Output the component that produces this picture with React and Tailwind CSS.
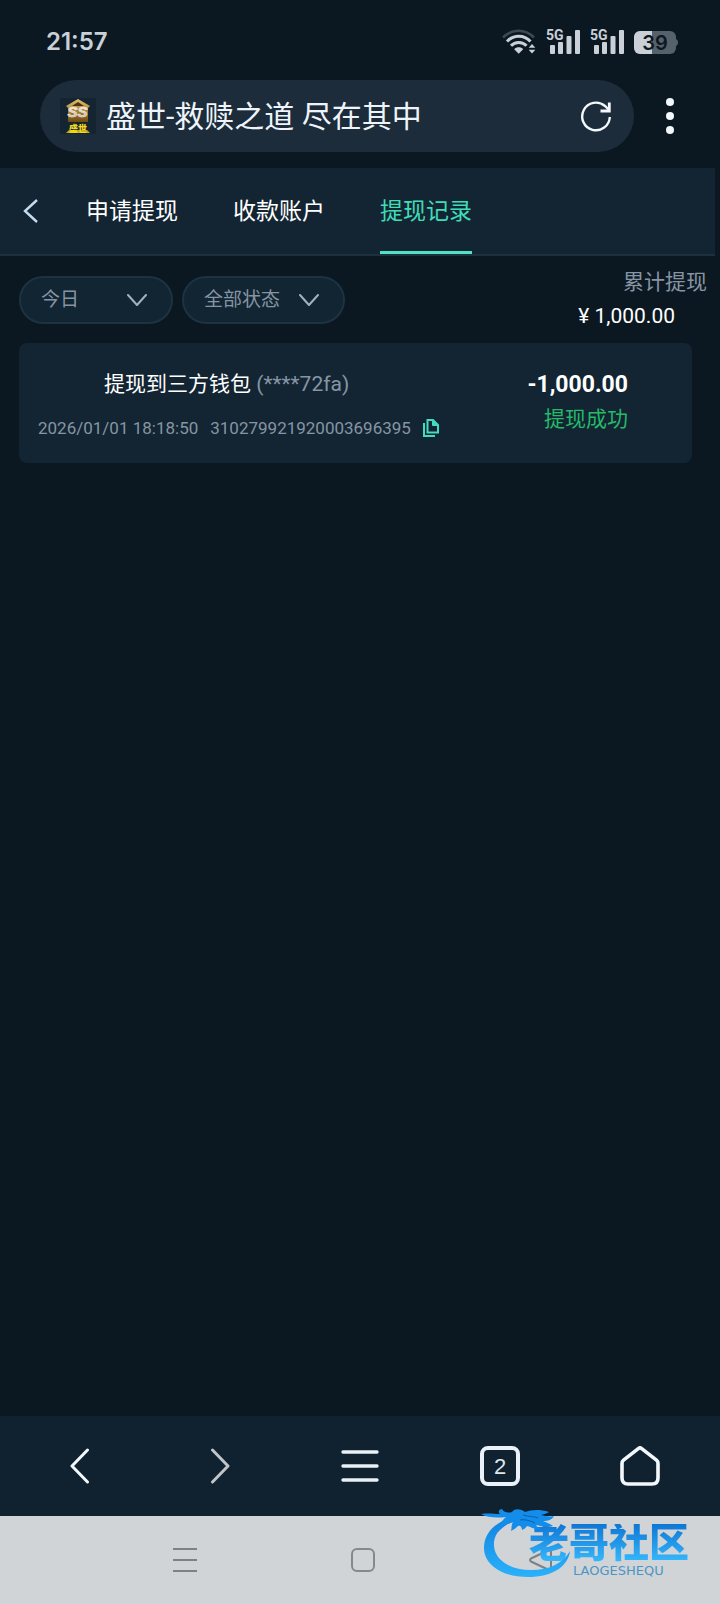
import { useState } from "react";

const tabs = ["申请提现", "收款账户", "提现记录"];

const records = [
  {
    id: "310279921920003696395",
    title: "提现到三方钱包",
    wallet: "(****72fa)",
    time: "2026/01/01 18:18:50",
    amount: "-1,000.00",
    status: "提现成功",
  },
];

function WifiIcon() {
  return (
    <svg width="34" height="26" viewBox="0 0 34 26" fill="none">
      <path d="M1 8.5C10 -0.5 23 -0.5 32 8.5" stroke="#3d4a55" strokeWidth="2.6" />
      <path d="M5 12.5C11.5 5.500 22 5.500 28.500 12.500" stroke="#c9d0d8" strokeWidth="3" />
      <path d="M9 16.800C13 12.400 20.500 12.400 24.500 16.800" stroke="#c9d0d8" strokeWidth="3" />
      <path d="M16.700 24.800L12.200 20.200C14.500 17.600 19 17.600 21.200 20.200Z" fill="#c9d0d8" />
      <path d="M26.700 18.800L30 15L33.300 18.800ZM26.700 20.800H33.300L30 24.500Z" fill="#c9d0d8" />
    </svg>
  );
}

function Signal() {
  return (
    <div className="relative h-[26px] w-[34px] text-[#c9d0d8]">
      <span className="absolute -top-px left-0 text-[14px] leading-[14px] font-bold">5G</span>
      <svg width="34" height="26" viewBox="0 0 34 26" fill="currentColor">
        <rect x="4" y="16" width="5" height="9" rx="1" />
        <rect x="12" y="13" width="5" height="12" rx="1" />
        <rect x="20.500" y="7" width="5" height="18" rx="1" />
        <rect x="29" y="1" width="5" height="24" rx="1" />
      </svg>
    </div>
  );
}

function Battery() {
  return (
    <div className="relative h-[23px] w-[44px]">
      <svg width="44" height="23" viewBox="0 0 44 23">
        <path d="M41 8C43 8 44 9.500 44 11.500S43 15 41 15Z" fill="#56616b" />
        <rect width="42" height="23" rx="6" fill="#56616b" />
        <path d="M6 0H18V23H6A6 6 0 0 1 0 17V6A6 6 0 0 1 6 0Z" fill="#c9d0d8" />
      </svg>
      <span className="absolute inset-0 pr-0.5 text-center font-[Inter] text-[20px] leading-[24px] font-semibold text-[#0c1821]">
        39
      </span>
    </div>
  );
}

function SiteIcon() {
  return (
    <svg width="36" height="36" viewBox="0 0 36 36" className="shrink-0">
      <defs>
        <linearGradient id="gold" x1="0" y1="0" x2="0" y2="1">
          <stop offset="0" stopColor="#e6c46a" />
          <stop offset="1" stopColor="#6d4a10" />
        </linearGradient>
        <linearGradient id="silver" x1="0" y1="0" x2="0" y2="1">
          <stop offset="0" stopColor="#ffffff" />
          <stop offset="1" stopColor="#c0a58c" />
        </linearGradient>
      </defs>
      <rect width="36" height="36" fill="#142431" />
      <path d="M18 1L30 8L28 10V24H8V10L6 8Z" fill="url(#gold)" />
      <path d="M18 4L24 8H12Z" fill="#4b3511" />
      <text x="17.500" y="19" textAnchor="middle" fontFamily="Liberation Sans, sans-serif" fontSize="15" fontWeight="700" fontStyle="italic" fill="url(#silver)" stroke="#efe6dc" strokeWidth="0.6">
        SS
      </text>
      <path d="M6 35L9 32H27L30 35Z" fill="#c7a712" />
      <text x="18" y="34" textAnchor="middle" fontFamily="Noto Sans CJK SC, sans-serif" fontSize="9" fontWeight="900" fill="#f2d91c">
        盛世
      </text>
    </svg>
  );
}

function FilterSelect({ label, options, className }) {
  return (
    <div className={`relative ${className}`}>
      <select
        aria-label={label}
        className="h-12 w-full appearance-none rounded-full border-2 border-[#1d3342] bg-[#122533] pl-5 text-[19px] text-[#8695a4] outline-none"
      >
        {options.map((o) => (
          <option key={o}>{o}</option>
        ))}
      </select>
      <svg
        width="20"
        height="12"
        viewBox="0 0 20 12"
        fill="none"
        stroke="#a3b1bf"
        strokeWidth="2"
        strokeLinecap="round"
        strokeLinejoin="round"
        className="pointer-events-none absolute top-[18px] right-[26px]"
      >
        <path d="M1 1L10 11L19 1" />
      </svg>
    </div>
  );
}

function Watermark() {
  return (
    <div className="pointer-events-none absolute -top-4 right-[15px] h-[90px] w-[230px]">
      <svg width="230" height="90" viewBox="0 0 230 90" className="absolute inset-0">
        <defs>
          <linearGradient id="dragon" x1="0" y1="0" x2="0" y2="1">
            <stop offset="0" stopColor="#0f82e0" />
            <stop offset="1" stopColor="#2bb2fb" />
          </linearGradient>
        </defs>
        <path
          d="M38 17C20 22 9 33 9 48C9 64 26 77 53 77C77 77 93 67 95 51C88 63 75 70 56 70C35 70 20 60 19 46C18 34 27 24 42 21Z"
          fill="url(#dragon)"
        />
        <path
          d="M6 14C14 13 19 14 25 14C22 11 25 9 27 9C29 13 34 13 37 12C40 8 46 9 50 12C56 10 64 9 74 12C71 14 68 14 66 15C71 16 75 17 79 16C77 20 73 21 68 21C72 23 76 24 78 26C72 28 66 26 61 25C62 27 64 28 66 29C60 30 56 27 52 26C51 28 49 29 47 30C47 27 45 25 43 26C41 28 38 30 36 31C37 28 36 25 38 22C31 24 27 28 23 32C24 26 26 21 31 17C23 18 13 18 6 14Z"
          fill="#148cea"
        />
        <path d="M48 15C54 17 59 16 63 18M45 20C50 19 56 21 60 23" stroke="#0a5fae" strokeWidth="1" fill="none" />
      </svg>
      <div className="flex flex-col pt-[24px] pl-[54px]">
        <span className="bg-gradient-to-b from-[#0f76d4] to-[#38bcff] bg-clip-text text-[40px] leading-[40px] font-black whitespace-nowrap text-transparent">
          老哥社区
        </span>
        <span className="pl-[44px] font-['DejaVu_Sans'] text-[13px] leading-[13px] text-[#4d94c4]">LAOGESHEQU</span>
      </div>
    </div>
  );
}

export default function App() {
  const [activeTab, setActiveTab] = useState("提现记录");

  return (
    <div className="flex min-h-screen flex-col bg-[#0c1821] font-[Roboto,'Noto_Sans_CJK_SC',sans-serif] text-white">
      {/* Status bar */}
      <div className="flex h-20 items-center justify-between pt-1 pr-[42px] pl-[46px]">
        <span className="font-[Inter] text-[24px] leading-[32px] font-semibold text-[#c9d0d8]">21:57</span>
        <div className="flex items-center gap-[10px]">
          <WifiIcon />
          <Signal />
          <Signal />
          <Battery />
        </div>
      </div>

      {/* Address bar */}
      <div className="mb-4 flex items-center gap-[31px] pr-[45px] pl-10">
        <div className="flex h-[72px] flex-1 items-center gap-[10px] rounded-full bg-[#1c2c3b] pr-[22px] pl-5">
          <SiteIcon />
          <span className="flex-1 pt-0.5 text-[30px] leading-[40px] whitespace-nowrap text-[#eef4fa]">
            盛世-救赎之道 尽在其中
          </span>
          <button type="button" aria-label="刷新">
            <svg width="32" height="32" viewBox="0 0 32 32" fill="none" stroke="#f3f8fc" strokeWidth="2.4">
              <path d="M29.800 17A13.800 13.800 0 1 1 25 6L29 10" />
              <path d="M29.300 2.500V11H20.500" strokeWidth="2.800" />
            </svg>
          </button>
        </div>
        <button type="button" aria-label="更多">
          <svg width="10" height="38" viewBox="0 0 10 38" fill="#f3f8fc">
            <circle cx="5" cy="5" r="4" />
            <circle cx="5" cy="19" r="4" />
            <circle cx="5" cy="33" r="4" />
          </svg>
        </button>
      </div>

      {/* Tabs */}
      <nav className="mr-[5px] flex h-[88px] items-stretch border-b-2 border-[#1c3040] bg-[#132533] pl-[23px]">
        <button type="button" aria-label="返回" className="mr-12">
          <svg width="15" height="24" viewBox="0 0 15 24" fill="none" stroke="#c3dcf2" strokeWidth="2.4">
            <path d="M14 1L2 12L14 23" />
          </svg>
        </button>
        <div className="flex gap-[55px]">
          {tabs.map((tab) => (
            <button
              key={tab}
              type="button"
              onClick={() => setActiveTab(tab)}
              className={`border-b-3 pt-1.5 text-[23px] ${
                tab === activeTab ? "border-[#4fe3c6] text-[#3fdcb8]" : "border-transparent text-white"
              }`}
            >
              {tab}
            </button>
          ))}
        </div>
      </nav>

      <main className="flex-1">
        {/* Filters */}
        <div className="flex items-start pr-[13px] pb-[10px] pl-[19px]">
          <div className="flex flex-1 gap-[9px] pt-5">
            <FilterSelect label="日期" options={["今日", "昨日", "近7日"]} className="w-[154px]" />
            <FilterSelect label="状态" options={["全部状态", "提现成功"]} className="w-[163px]" />
          </div>
          <div className="flex flex-col items-end pt-[9px] text-[21px] leading-[34px]">
            <span className="text-[#8695a4]">累计提现</span>
            <span className="mr-8">¥ 1,000.00</span>
          </div>
        </div>

        {/* Records */}
        <ul className="mr-7 ml-[19px]">
          {records.map((r) => (
            <li key={r.id} className="flex h-[120px] justify-between rounded-lg bg-[#132533] pt-[21px] pr-16 pl-[19px]">
              <div className="leading-10">
                <p className="pl-[66px] text-[21px]">
                  {r.title} <span className="text-[#8695a4]">{r.wallet}</span>
                </p>
                <p className="mt-1 flex items-center gap-3 text-[17px] text-[#8695a4]">
                  <span>{r.time}</span>
                  <span>{r.id}</span>
                  <button type="button" aria-label="复制">
                    <svg width="16" height="18" viewBox="0 0 16 18" fill="none" stroke="#43dcc0" strokeWidth="2">
                      <path d="M1 4V17H12" />
                      <path d="M4.500 1H10L15 6V13.500H4.500Z" />
                      <path d="M9.500 1V6.500H15Z" fill="#43dcc0" strokeWidth="1" />
                    </svg>
                  </button>
                </p>
              </div>
              <div className="pt-[3px] text-right leading-[35px]">
                <p className="text-[23px] font-bold">{r.amount}</p>
                <p className="text-[21px] text-[#25b968]">{r.status}</p>
              </div>
            </li>
          ))}
        </ul>
      </main>

      {/* Browser toolbar */}
      <footer>
        <div className="grid h-[100px] grid-cols-5 place-items-center bg-[#10212f] px-[10px]">
          <button type="button" aria-label="后退">
            <svg width="20" height="36" viewBox="0 0 20 36" fill="none" stroke="#f3f8fc" strokeWidth="3" strokeLinecap="round" strokeLinejoin="round">
              <path d="M17.500 2L2 18L17.500 34" />
            </svg>
          </button>
          <button type="button" aria-label="前进">
            <svg width="20" height="36" viewBox="0 0 20 36" fill="none" stroke="#c0c5ca" strokeWidth="3" strokeLinecap="round" strokeLinejoin="round">
              <path d="M2.500 2L18 18L2.500 34" />
            </svg>
          </button>
          <button type="button" aria-label="菜单">
            <svg width="38" height="32" viewBox="0 0 38 32" stroke="#e8f0f8" strokeWidth="3.400" strokeLinecap="round">
              <path d="M2 2H36M2 16H36M2 30H36" />
            </svg>
          </button>
          <button
            type="button"
            aria-label="标签页"
            className="h-10 w-10 rounded-lg border-4 border-[#eaf1f8] font-['Liberation_Sans'] text-[22px] leading-[34px] text-[#dfe6ec]"
          >
            2
          </button>
          <button type="button" aria-label="主页">
            <svg width="40" height="40" viewBox="0 0 40 40" fill="none" stroke="#f3f8fc" strokeWidth="3.600" strokeLinejoin="round">
              <path d="M18.300 2.600Q20 1.300 21.700 2.600L36.500 14.200Q38 15.500 38 17.500V32Q38 38 32 38H8Q2 38 2 32V17.500Q2 15.500 3.500 14.200Z" />
            </svg>
          </button>
        </div>

        {/* System navigation */}
        <div className="relative grid h-[88px] grid-cols-3 place-items-center bg-[#d0d4d6] pr-[90px] pl-24">
          <button type="button" aria-label="最近任务">
            <svg width="24" height="24" viewBox="0 0 24 24" stroke="#7d8183" strokeWidth="2">
              <path d="M0 1H24M0 12H24M0 23H24" />
            </svg>
          </button>
          <button type="button" aria-label="主屏幕" className="h-6 w-6 rounded-md border-2 border-[#85898b]" />
          <button type="button" aria-label="返回上级">
            <svg width="24" height="24" viewBox="0 0 24 24" fill="none" stroke="#7d8183" strokeWidth="2" strokeLinejoin="round">
              <path d="M22 1V23L2 13.500Q0 12 2 10.500Z" />
            </svg>
          </button>
          <Watermark />
        </div>
      </footer>
    </div>
  );
}
